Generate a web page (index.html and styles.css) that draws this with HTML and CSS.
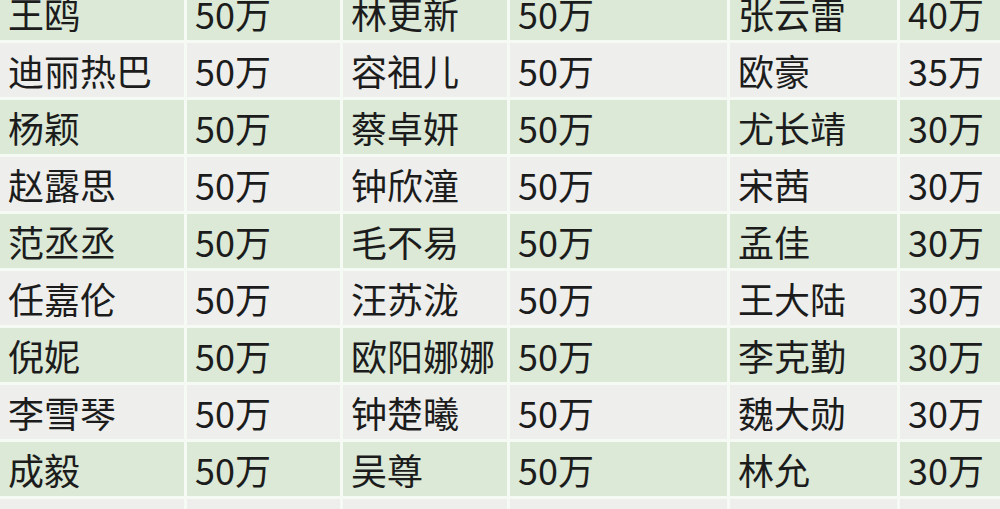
FILE: index.html
```html
<!DOCTYPE html>
<html lang="zh">
<head>
<meta charset="utf-8">
<link rel="stylesheet" href="styles.css">
</head>
<body>
<div class="table">
  <div class="row g"><div class="c">王鸥</div><div class="c">50万</div><div class="c">林更新</div><div class="c">50万</div><div class="c">张云雷</div><div class="c">40万</div></div>
  <div class="row w"><div class="c">迪丽热巴</div><div class="c">50万</div><div class="c">容祖儿</div><div class="c">50万</div><div class="c">欧豪</div><div class="c">35万</div></div>
  <div class="row g"><div class="c">杨颖</div><div class="c">50万</div><div class="c">蔡卓妍</div><div class="c">50万</div><div class="c">尤长靖</div><div class="c">30万</div></div>
  <div class="row w"><div class="c">赵露思</div><div class="c">50万</div><div class="c">钟欣潼</div><div class="c">50万</div><div class="c">宋茜</div><div class="c">30万</div></div>
  <div class="row g"><div class="c">范丞丞</div><div class="c">50万</div><div class="c">毛不易</div><div class="c">50万</div><div class="c">孟佳</div><div class="c">30万</div></div>
  <div class="row w"><div class="c">任嘉伦</div><div class="c">50万</div><div class="c">汪苏泷</div><div class="c">50万</div><div class="c">王大陆</div><div class="c">30万</div></div>
  <div class="row g"><div class="c">倪妮</div><div class="c">50万</div><div class="c">欧阳娜娜</div><div class="c">50万</div><div class="c">李克勤</div><div class="c">30万</div></div>
  <div class="row w"><div class="c">李雪琴</div><div class="c">50万</div><div class="c">钟楚曦</div><div class="c">50万</div><div class="c">魏大勋</div><div class="c">30万</div></div>
  <div class="row g"><div class="c">成毅</div><div class="c">50万</div><div class="c">吴尊</div><div class="c">50万</div><div class="c">林允</div><div class="c">30万</div></div>
  <div class="row w"><div class="c"></div><div class="c"></div><div class="c"></div><div class="c"></div><div class="c"></div><div class="c"></div></div>
</div>
</body>
</html>
```
FILE: styles.css
```css
html, body {
  margin: 0;
  padding: 0;
  background: #f6faf4;
  overflow: hidden;
}
.table {
  display: flex;
  flex-direction: column;
  gap: 3px;
  margin-top: -14px;
  font-family: "Noto Sans CJK SC", "Noto Sans", sans-serif;
  font-size: 36px;
  color: #1c1c1c;
}
.row {
  display: grid;
  grid-template-columns: 184px 153px 164px 217px 167px 1fr;
  column-gap: 3px;
  height: 54px;
}
.c {
  display: flex;
  align-items: center;
  padding-left: 8px;
  white-space: nowrap;
  overflow: hidden;
  line-height: 1;
}
.g .c { background: #dbe9d6; }
.w .c { background: #eeefed; }
```
